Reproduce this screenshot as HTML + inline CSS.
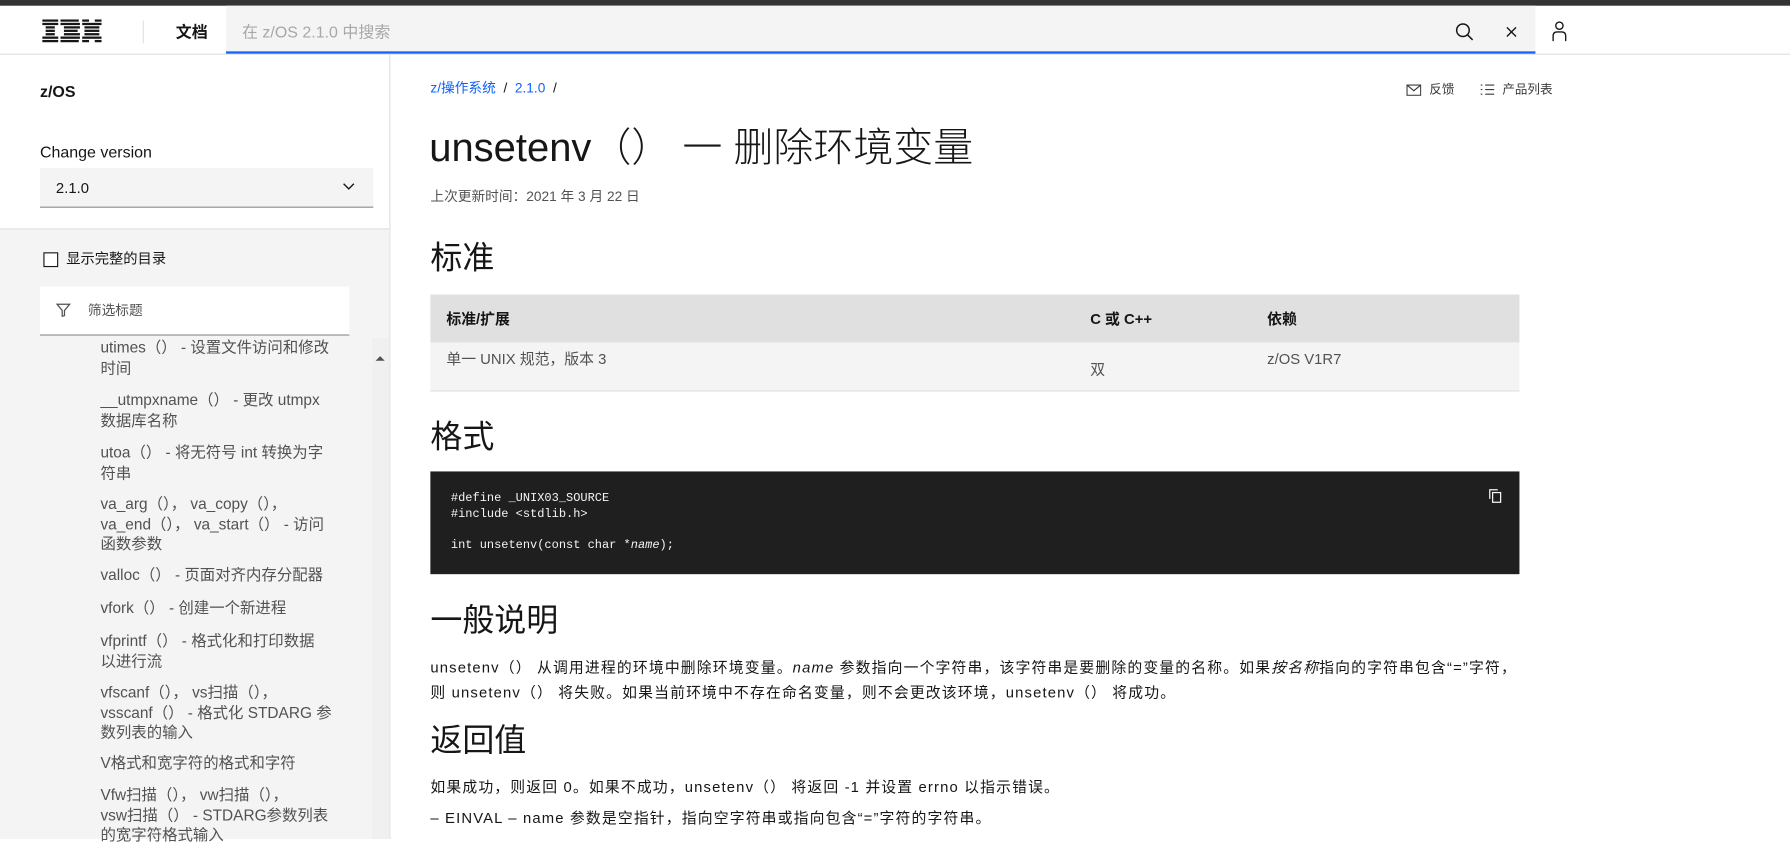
<!DOCTYPE html>
<html><head><meta charset="utf-8"><style>
*{margin:0;padding:0;box-sizing:border-box}
html,body{width:1790px;height:839px;overflow:hidden;background:#fff}
#w{position:absolute;left:0;top:0;width:1568px;height:735px;transform:scale(1.14158,1.1415);transform-origin:0 0;font-family:"Liberation Sans","Noto Sans CJK SC",sans-serif;color:#161616}
.a{position:absolute;white-space:nowrap}
.li{position:absolute;left:88px;width:240px;font-size:13.5px;line-height:17.5px;color:#525252;white-space:nowrap}
h2{position:absolute;left:377px;font-size:28px;font-weight:400;line-height:34px}
p.t{position:absolute;left:377px;font-size:13px;color:#161616;white-space:nowrap;letter-spacing:1px}
</style></head><body><div id="w">
<div class="a" style="left:0;top:0;width:1568px;height:5px;background:#333"></div>
<div class="a" style="left:0;top:47px;width:1568px;height:1px;background:#e0e0e0"></div>
<svg class="a" style="left:37px;top:17px" width="52" height="21" viewBox="0 0 52 21"><g fill="#161616">
<rect x="0" y="0" width="14" height="2"/><rect x="0" y="3" width="14" height="2"/><rect x="3" y="6" width="8" height="2"/><rect x="3" y="9" width="8" height="2"/><rect x="3" y="12" width="8" height="2"/><rect x="0" y="15" width="14" height="2"/><rect x="0" y="18" width="14" height="2"/>
<rect x="16" y="0" width="16" height="2"/><rect x="16" y="3" width="17" height="2"/><rect x="19" y="6" width="14" height="2"/><rect x="19" y="9" width="12" height="2"/><rect x="19" y="12" width="14" height="2"/><rect x="16" y="15" width="17" height="2"/><rect x="16" y="18" width="16" height="2"/>
<rect x="35" y="0" width="6" height="2"/><rect x="46" y="0" width="6" height="2"/><rect x="35" y="3" width="17" height="2"/><rect x="37" y="6" width="13" height="2"/><rect x="37" y="9" width="13" height="2"/><rect x="37" y="12" width="13" height="2"/><rect x="35" y="15" width="17" height="2"/><rect x="35" y="18" width="6" height="2"/><rect x="46" y="18" width="6" height="2"/></g></svg>
<div class="a" style="left:125px;top:18px;width:1px;height:20px;background:#e0e0e0"></div>
<div class="a" style="left:154px;top:18px;font-size:14px;font-weight:bold;line-height:20px">文档</div>
<div class="a" style="left:198px;top:5px;width:1147px;height:42px;background:#f4f4f4;border-bottom:2px solid #0f62fe"></div>
<div class="a" style="left:212px;top:18px;font-size:14px;color:#a8a8a8;line-height:20px">在 z/OS 2.1.0 中搜索</div>
<svg class="a" style="left:1274px;top:19px" width="18" height="18" viewBox="0 0 18 18" fill="none" stroke="#161616" stroke-width="1.3"><circle cx="7.5" cy="7.5" r="5.5"/><path d="M11.5 11.5L16 16"/></svg>
<svg class="a" style="left:1319px;top:23px" width="10" height="10" viewBox="0 0 10 10" stroke="#161616" stroke-width="1.2"><path d="M1 1L9 9M9 1L1 9"/></svg>
<svg class="a" style="left:1359px;top:18px" width="14" height="19" viewBox="0 0 14 19" fill="none" stroke="#161616" stroke-width="1.2"><circle cx="7" cy="4.5" r="3.2"/><path d="M1.5 18V13.5Q1.5 10 5 10H9Q12.5 10 12.5 13.5V18"/></svg>
<div class="a" style="left:341px;top:48px;width:1px;height:687px;background:#e0e0e0"></div>
<div class="a" style="left:35px;top:71px;font-size:14px;font-weight:bold;line-height:18px">z/OS</div>
<div class="a" style="left:35px;top:124px;font-size:14px;line-height:18px;color:#161616">Change version</div>
<div class="a" style="left:35px;top:147px;width:292px;height:35px;background:#f4f4f4;border-bottom:1px solid #8d8d8d"></div>
<div class="a" style="left:49px;top:156px;font-size:13px;line-height:17px">2.1.0</div>
<svg class="a" style="left:300px;top:160px" width="11" height="7" viewBox="0 0 11 7" fill="none" stroke="#161616" stroke-width="1.2"><path d="M1 1L5.5 5.5L10 1"/></svg>
<div class="a" style="left:0;top:200px;width:341px;height:535px;background:#f4f4f4;border-top:1px solid #e0e0e0"></div>
<div class="a" style="left:38px;top:221px;width:13px;height:13px;border:1.3px solid #161616;background:#fff"></div>
<div class="a" style="left:58px;top:219px;font-size:12.5px;line-height:17px">显示完整的目录</div>
<div class="li" style="top:296px">utimes（） - 设置文件访问和修改<br>时间</div>
<div class="a" style="left:35px;top:251px;width:271px;height:43px;background:#fff;border-bottom:1px solid #8d8d8d"></div>
<svg class="a" style="left:49px;top:265px" width="13" height="13" viewBox="0 0 13 13" fill="none" stroke="#525252" stroke-width="1.1"><path d="M1 1.5H12L7.5 7V11.5L5.5 12V7Z"/></svg>
<div class="a" style="left:77px;top:264px;font-size:12px;color:#525252;line-height:16px">筛选标题</div>
<div class="a" style="left:326px;top:296px;width:15px;height:439px;background:#f0f0f0"></div>
<div class="a" style="left:329px;top:312px;width:0;height:0;border-left:4px solid transparent;border-right:4px solid transparent;border-bottom:4px solid #505050"></div>
<div class="li" style="top:342px">__utmpxname（） - 更改 utmpx<br>数据库名称</div>
<div class="li" style="top:388px">utoa（） - 将无符号 int 转换为字<br>符串</div>
<div class="li" style="top:433px">va_arg（）， va_copy（），<br>va_end（）， va_start（） - 访问<br>函数参数</div>
<div class="li" style="top:495px">valloc（） - 页面对齐内存分配器</div>
<div class="li" style="top:524px">vfork（） - 创建一个新进程</div>
<div class="li" style="top:553px">vfprintf（） - 格式化和打印数据<br>以进行流</div>
<div class="li" style="top:598px">vfscanf（）， vs扫描（），<br>vsscanf（） - 格式化 STDARG 参<br>数列表的输入</div>
<div class="li" style="top:660px">V格式和宽字符的格式和字符</div>
<div class="li" style="top:688px">Vfw扫描（）， vw扫描（），<br>vsw扫描（） - STDARG参数列表<br>的宽字符格式输入</div>
<div class="a" style="left:377px;top:69px;font-size:12px;color:#0f62fe;line-height:16px">z/操作系统 <span style="color:#161616">&nbsp;/&nbsp;</span> 2.1.0 <span style="color:#161616">&nbsp;/</span></div>
<svg class="a" style="left:1232px;top:74px" width="13" height="10" viewBox="0 0 13 10" fill="none" stroke="#393939" stroke-width="1"><rect x=".5" y=".5" width="12" height="9"/><path d="M.5 .5L6.5 5.5L12.5 .5"/></svg>
<div class="a" style="left:1252px;top:71px;font-size:11px;color:#393939;line-height:16px">反馈</div>
<svg class="a" style="left:1297px;top:73px" width="12" height="11" viewBox="0 0 12 11" stroke="#393939" stroke-width="1"><path d="M0 1.5H1.5M0 5.5H1.5M0 9.5H1.5M4 1.5H12M4 5.5H12M4 9.5H12"/></svg>
<div class="a" style="left:1316px;top:71px;font-size:11px;color:#393939;line-height:16px">产品列表</div>
<div class="a" style="left:376px;top:108px;font-size:35px;font-weight:300;line-height:44px;color:#161616">unsetenv（） 一 删除环境变量</div>
<div class="a" style="left:377px;top:164px;font-size:12px;color:#525252;line-height:16px">上次更新时间：2021 年 3 月 22 日</div>
<h2 style="top:209px">标准</h2>
<div class="a" style="left:377px;top:258px;width:954px;height:42px;background:#e0e0e0"></div>
<div class="a" style="left:377px;top:300px;width:954px;height:43px;background:#f4f4f4;border-bottom:1px solid #e0e0e0"></div>
<div class="a" style="left:391px;top:271px;font-size:13px;font-weight:bold;line-height:17px">标准/扩展</div>
<div class="a" style="left:955px;top:271px;font-size:13px;font-weight:bold;line-height:17px">C 或 C++</div>
<div class="a" style="left:1110px;top:271px;font-size:13px;font-weight:bold;line-height:17px">依赖</div>
<div class="a" style="left:391px;top:306px;font-size:13px;color:#525252;line-height:17px">单一 UNIX 规范，版本 3</div>
<div class="a" style="left:955px;top:315px;font-size:13px;color:#525252;line-height:17px">双</div>
<div class="a" style="left:1110px;top:306px;font-size:13px;color:#525252;line-height:17px">z/OS V1R7</div>
<h2 style="top:366px">格式</h2>
<div class="a" style="left:377px;top:413px;width:954px;height:90px;background:#1f1f1f"></div>
<div class="a" style="left:395px;top:431px;font-family:'Liberation Mono',monospace;font-size:10.5px;line-height:13.5px;color:#f4f4f4;white-space:pre">#define _UNIX03_SOURCE
#include &lt;stdlib.h&gt;

int unsetenv(const char *<i>name</i>);</div>
<svg class="a" style="left:1304px;top:428px" width="12" height="13" viewBox="0 0 12 13" fill="none" stroke="#f4f4f4" stroke-width="1.1"><path d="M1 9V1H8"/><rect x="3.5" y="3.5" width="7" height="8.5"/></svg>
<h2 style="top:527px">一般说明</h2>
<p class="t" style="top:576px;line-height:18px">unsetenv（） 从调用进程的环境中删除环境变量。<i>name</i> 参数指向一个字符串，该字符串是要删除的变量的名称。如果<i>按名称</i>指向的字符串包含“=”字符，</p>
<p class="t" style="top:598px;line-height:18px">则 unsetenv（） 将失败。如果当前环境中不存在命名变量，则不会更改该环境，unsetenv（） 将成功。</p>
<h2 style="top:632px">返回值</h2>
<p class="t" style="top:681px;line-height:18px">如果成功，则返回 0。如果不成功，unsetenv（） 将返回 -1 并设置 errno 以指示错误。</p>
<p class="t" style="top:708px;line-height:18px">– EINVAL – name 参数是空指针，指向空字符串或指向包含“=”字符的字符串。</p>
</div></body></html>
